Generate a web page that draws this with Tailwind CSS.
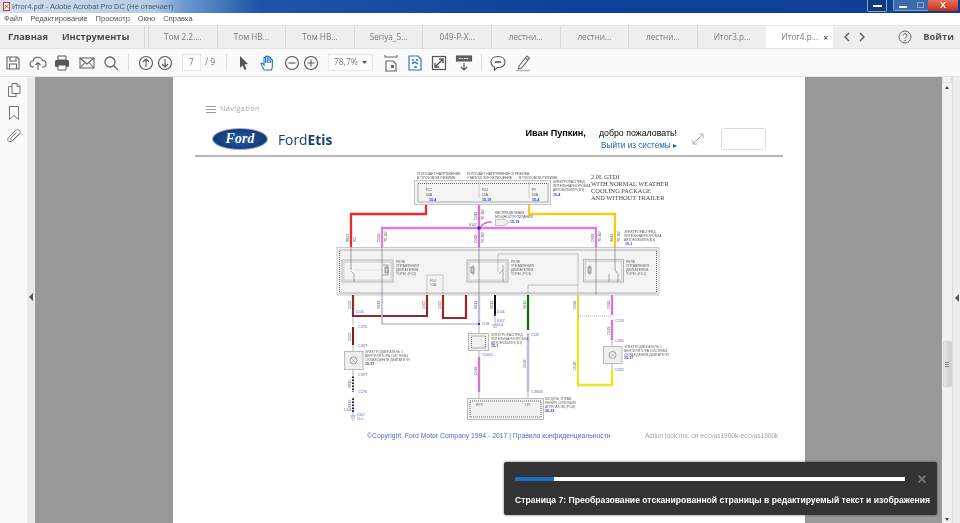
<!DOCTYPE html>
<html lang="ru">
<head>
<meta charset="utf-8">
<title>Итог4.pdf</title>
<script src="https://cdn.jsdelivr.net/npm/@tailwindcss/browser@4"></script>
</head>
<body class="m-0 overflow-hidden bg-[#999]">
<div class="relative w-[960px] h-[523px] overflow-hidden flex flex-col font-['Open_Sans','Noto_Sans',sans-serif] blur-[0.45px]">

  <!-- title bar -->
  <div class="h-[13px] shrink-0 flex items-center bg-[linear-gradient(90deg,#d3e0ef_0%,#b4cbe4_16%,#6f9bd0_19%,#1a55a8_27%,#0d4199_60%,#0d3f94_100%)]">
    <svg class="ml-[3px] w-[7px] h-[9px]" viewBox="0 0 7 9"><rect x="0.5" y="0.5" width="6" height="8" fill="#fff" stroke="#c33"/><path d="M1.5 7 L5 2.5 M2 3 L5.5 6" stroke="#c22" stroke-width="0.8"/></svg>
    <span class="ml-[2px] text-[7.4px] leading-none text-[#4b5a70] font-['Liberation_Sans',sans-serif]">Итог4.pdf - Adobe Acrobat Pro DC (Не отвечает)</span>
    <div class="ml-auto mr-[2px] flex items-start self-start h-[12px]">
      <div class="w-[20px] h-[12px] rounded-b-[2px] border border-t-0 border-[#8fa4c0] bg-[#0d3a80] flex items-center justify-center"><span class="w-[9px] h-[2px] bg-white"></span></div>
      <div class="ml-[6px] w-[19px] h-[11px] rounded-bl-[2px] border-l border-b border-[#8fa4c0] bg-[#3d6aa8] flex items-end justify-center pb-[2px]"><span class="w-[8px] h-[2px] bg-white"></span></div>
      <div class="w-[16px] h-[11px] border-b border-[#8fa4c0] bg-[#3d6aa8] flex items-center justify-center"><span class="w-[7px] h-[6px] border border-[#8ba6cc]"></span></div>
      <div class="w-[30px] h-[11px] rounded-br-[2px] bg-gradient-to-b from-[#e2725c] to-[#c8281a] flex items-center justify-center text-white text-[9px] leading-none font-bold font-['Liberation_Sans',sans-serif]">X</div>
    </div>
  </div>

  <!-- menu -->
  <div class="h-[12px] shrink-0 bg-white flex items-center pl-[4px] gap-[8px] text-[7.5px] leading-none text-[#555] font-['Liberation_Sans',sans-serif]">
    <span>Файл</span><span>Редактирование</span><span>Просмотр</span><span>Окно</span><span>Справка</span>
  </div>

  <!-- tabs -->
  <div class="h-[23px] shrink-0 bg-[#eeeeee] border-t border-[#e4e4e4] flex items-stretch text-[#7a7a7a] text-[8.2px]">
    <div class="w-[145px] flex items-center pl-[8px] gap-[14px] text-[9.3px] font-bold text-[#484848] border-r border-[#d8d8d8]">
      <span>Главная</span><span>Инструменты</span>
    </div>
    <div class="w-[3px]"></div>
    <div class="w-[68.6px] flex items-center justify-center border-l border-[#d8d8d8]">Том 2.2....</div>
    <div class="w-[68.6px] flex items-center justify-center border-l border-[#d8d8d8]">Том НВ...</div>
    <div class="w-[68.6px] flex items-center justify-center border-l border-[#d8d8d8]">Том НВ...</div>
    <div class="w-[68.6px] flex items-center justify-center border-l border-[#d8d8d8]">Seriya_5...</div>
    <div class="w-[68.6px] flex items-center justify-center border-l border-[#d8d8d8]">049-Р-Х...</div>
    <div class="w-[68.6px] flex items-center justify-center border-l border-[#d8d8d8]">лестни...</div>
    <div class="w-[68.6px] flex items-center justify-center border-l border-[#d8d8d8]">лестни...</div>
    <div class="w-[68.6px] flex items-center justify-center border-l border-[#d8d8d8]">лестни...</div>
    <div class="w-[69.6px] flex items-center justify-center border-l border-[#d8d8d8]">Итог3.р...</div>
    <div class="w-[67px] bg-white flex items-center pl-[15px] gap-[5px]"><span>Итог4.р...</span><span class="text-[9px] font-bold text-[#555] leading-none">×</span></div>
    <svg class="ml-[9px] self-center w-[10px] h-[10px]" viewBox="0 0 10 10" fill="none" stroke="#555" stroke-width="1.3"><path d="M7 1 L3 5 L7 9"/></svg>
    <svg class="ml-[5px] self-center w-[10px] h-[10px]" viewBox="0 0 10 10" fill="none" stroke="#555" stroke-width="1.3"><path d="M3 1 L7 5 L3 9"/></svg>
    <svg class="ml-[31px] self-center w-[14px] h-[14px]" viewBox="0 0 14 14" fill="none" stroke="#666"><circle cx="7" cy="7" r="6"/><path d="M5.2 5.5 a1.9 1.9 0 1 1 2.6 1.8 q-0.8 0.4 -0.8 1.3" /><circle cx="7" cy="10.5" r="0.4"/></svg>
    <span class="ml-[11px] self-center text-[9.3px] font-bold text-[#555]">Войти</span>
  </div>

  <!-- toolbar -->
  <div class="h-[29px] shrink-0 bg-[#fafafa] border-t border-[#e2e2e2] border-b flex items-center pl-[4px] text-[#777]">
    <svg class="w-[18px] h-[18px]" viewBox="0 0 18 18" fill="none" stroke="#666" stroke-width="1.1"><path d="M3 3 H13 L15 5 V15 H3 Z M6 3 V7 H12 V3 M5.5 15 V10 H12.5 V15"/></svg>
    <svg class="ml-[7px] w-[18px] h-[18px]" viewBox="0 0 18 18" fill="none" stroke="#666" stroke-width="1.1"><path d="M5 13 H4 A3 3 0 0 1 4 7 A5 5 0 0 1 13.5 6.5 A3.2 3.2 0 0 1 14 13 H13 M9 16 V9 M6.5 11 L9 8.5 L11.5 11"/></svg>
    <svg class="ml-[6px] w-[18px] h-[18px]" viewBox="0 0 18 18"><path d="M5 2 H13 V6 H5 Z" fill="none" stroke="#555"/><rect x="2" y="6" width="14" height="7" rx="1.5" fill="#555"/><path d="M5 11 H13 V16 H5 Z" fill="#fff" stroke="#555"/></svg>
    <svg class="ml-[7px] w-[18px] h-[18px]" viewBox="0 0 18 18" fill="none" stroke="#666" stroke-width="1.1"><rect x="2" y="4" width="14" height="10"/><path d="M2 4 L9 10 L16 4 M2 14 L7 8.5 M16 14 L11 8.5"/></svg>
    <svg class="ml-[6px] w-[18px] h-[18px]" viewBox="0 0 18 18" fill="none" stroke="#666" stroke-width="1.3"><circle cx="8" cy="8" r="5"/><path d="M11.5 11.5 L16 16"/></svg>
    <span class="ml-[8px] w-px h-[17px] bg-[#ddd]"></span>
    <svg class="ml-[8px] w-[18px] h-[18px]" viewBox="0 0 18 18" fill="none" stroke="#555" stroke-width="1.1"><circle cx="9" cy="9" r="6.5"/><path d="M9 13 V5 M6 8 L9 5 L12 8"/></svg>
    <svg class="ml-px w-[18px] h-[18px]" viewBox="0 0 18 18" fill="none" stroke="#555" stroke-width="1.1"><circle cx="9" cy="9" r="6.5"/><path d="M9 5 V13 M6 10 L9 13 L12 10"/></svg>
    <div class="ml-[8px] w-[19px] h-[17px] bg-white border border-[#e6e6e6] flex items-center justify-center text-[8.5px] leading-none">7</div>
    <span class="ml-[4px] w-[11px] text-[8.5px] leading-none whitespace-nowrap">/ 9</span>
    <span class="ml-[10px] w-px h-[17px] bg-[#ddd]"></span>
    <svg class="ml-[7px] w-[18px] h-[18px]" viewBox="0 0 18 18"><path d="M6 2 L14 10 L10.5 10.5 L12.5 15 L10.5 16 L8.5 11.5 L6 14 Z" fill="#555"/></svg>
    <svg class="ml-[7px] w-[18px] h-[18px]" viewBox="0 0 18 18" fill="none" stroke="#2d78c8" stroke-width="1.1"><path d="M5 16 C4 13 2 11 2 9.5 C2.5 8.5 4 9.5 5 11 V4 C5 3 6.5 3 6.5 4 V9 V2.8 C6.5 1.8 8.3 1.8 8.3 2.8 V9 V3 C8.3 2 10 2 10 3 V9 V4 C10 3 11.7 3 11.7 4 V9 V6 C11.7 5 13.4 5 13.4 6 V12 C13.4 14 12.5 15 12.5 16 Z"/></svg>
    <svg class="ml-[6px] w-[18px] h-[18px]" viewBox="0 0 18 18" fill="none" stroke="#555" stroke-width="1.1"><circle cx="9" cy="9" r="6.5"/><path d="M5.5 9 H12.5"/></svg>
    <svg class="ml-px w-[18px] h-[18px]" viewBox="0 0 18 18" fill="none" stroke="#555" stroke-width="1.1"><circle cx="9" cy="9" r="6.5"/><path d="M5.5 9 H12.5 M9 5.5 V12.5"/></svg>
    <div class="ml-[8px] w-[45px] h-[17px] bg-white border border-[#e6e6e6] flex items-center justify-between pl-[5px] pr-[5px] text-[8.5px] leading-none"><span>78,7%</span><svg class="w-[5px] h-[3px]" viewBox="0 0 5 3"><path d="M0 0 H5 L2.5 3 Z" fill="#555"/></svg></div>
    <svg class="ml-[9px] w-[18px] h-[18px]" viewBox="0 0 18 18" fill="none" stroke="#666" stroke-width="1.1"><path d="M3 1 V3 H15 V1 M4 17 V7 H11 L14 10 V17 M3 17 H15"/><path d="M9 11 H12 V14 H9 Z" fill="#666" stroke="none"/></svg>
    <svg class="ml-[6px] w-[18px] h-[18px]" viewBox="0 0 18 18" fill="none" stroke="#2d78c8" stroke-width="1.2"><path d="M3 2 H12 L15 5 V16 H3 Z"/><path d="M6 6 H8 M10 6 H12 M6 9.5 L9 8 L12 10 M8 13 L11 13" stroke-width="1.5"/></svg>
    <svg class="ml-[6px] w-[18px] h-[18px]" viewBox="0 0 18 18" fill="none" stroke="#555" stroke-width="1.2"><rect x="2.5" y="2.5" width="13" height="13"/><path d="M5 13 L13 5 M9 5 H13 V9 M5 9 V13 H9" stroke-width="1.4"/></svg>
    <svg class="ml-[7px] w-[18px] h-[18px]" viewBox="0 0 18 18" fill="none" stroke="#555" stroke-width="1.1"><rect x="1.5" y="2" width="15" height="5" fill="#666"/><path d="M4 4.5 H14" stroke="#fff" stroke-dasharray="1.5 1"/><path d="M9 9 V16 M6 13 L9 16 L12 13"/></svg>
    <span class="ml-[8px] w-px h-[17px] bg-[#ddd]"></span>
    <svg class="ml-[7px] w-[18px] h-[18px]" viewBox="0 0 18 18" fill="none" stroke="#555" stroke-width="1.1"><path d="M9 2.5 C4.5 2.5 2 5 2 8 C2 10.5 3.5 12 5.5 13 L5.5 16 L8.5 13.5 C13.5 13.5 16 11 16 8 C16 5 13.5 2.5 9 2.5 Z"/><path d="M6 8 H12" stroke-width="1.6"/></svg>
    <svg class="ml-[7px] w-[18px] h-[18px]" viewBox="0 0 18 18" fill="none" stroke="#666" stroke-width="1.1"><path d="M5 12 L13 2 L15.5 4 L7.5 14 L4.5 15 Z M11.5 4 L14 6"/><path d="M2 16.5 H16" stroke="#bbb" stroke-width="1.5"/></svg>
  </div>

  <!-- workspace -->
  <div class="flex-1 min-h-0 flex">
    <!-- left rail -->
    <div class="w-[27px] shrink-0 bg-[#fafafa] flex flex-col items-center pt-[5px] gap-[7px]">
      <svg class="w-[16px] h-[16px]" viewBox="0 0 16 16" fill="none" stroke="#777" stroke-width="1"><path d="M6 1.5 H11 L14 4.5 V11.5 H6 Z M11 1.5 V4.5 H14 M6 4.5 H2.5 V14.5 H10 V11.5"/></svg>
      <svg class="w-[16px] h-[16px]" viewBox="0 0 16 16" fill="none" stroke="#777" stroke-width="1"><path d="M3.5 1.5 H12.5 V14.5 L8 10.5 L3.5 14.5 Z"/></svg>
      <svg class="w-[16px] h-[16px]" viewBox="0 0 16 16" fill="none" stroke="#777" stroke-width="1"><path d="M13 6 L6.5 12.5 C5 14 2.5 14 2 12.5 C1.5 11 2 10 3 9 L9.5 2.5 C10.5 1.5 12.5 1.5 13.5 2.5 C14.5 3.5 14.5 5 13.5 6 L7.5 12 C7 12.5 5.5 12.5 5 11.5 C4.5 11 4.8 10 5.3 9.5 L10.5 4.5"/></svg>
    </div>
    <div class="w-[8px] shrink-0 bg-[#e9e9e9] flex items-center justify-center pt-[5px] pb-0">
      <span class="-ml-[1px] mt-[-12px] w-0 h-0 border-y-[4px] border-y-transparent border-r-[4px] border-r-[#555]"></span>
    </div>

    <!-- document viewer -->
    <div class="w-[907px] shrink-0 bg-[#999] overflow-hidden relative">
      <div class="ml-[138px] w-[632px] h-[460px] bg-white flex flex-col">
        <!-- nav -->
        <div class="h-[26px] mt-[19px] pl-[33px] flex items-center gap-[4px] shrink-0">
          <div class="w-[10px] flex flex-col gap-[2px]"><span class="h-px bg-[#999]"></span><span class="h-px bg-[#999]"></span><span class="h-px bg-[#999]"></span></div>
          <span class="text-[7.4px] leading-none tracking-[0.3px] text-[#aaa]">Navigation</span>
        </div>
        <!-- header -->
        <div class="ml-[22px] w-[588px] h-[35px] shrink-0 border-b-2 border-[#b5b5b5] flex items-start pt-[6px]">
          <div class="ml-[17px] w-[56px] h-[22px] rounded-[50%] bg-[radial-gradient(ellipse_at_center,#2a5fa8_0%,#123a7a_70%,#0d2c60_100%)] border border-[#9fb2cf] flex items-center justify-center text-white italic font-bold text-[14px] leading-none font-['Liberation_Serif',serif]">Ford</div>
          <div class="ml-[10px] mt-[3px] text-[13.8px] leading-[18px] text-[#1c3f74]">Ford<span class="font-bold">Etis</span></div>
          <div class="ml-auto -mt-[1px] flex flex-col items-end">
            <div class="text-[8.8px] leading-[12px] text-black whitespace-nowrap font-['Liberation_Sans',sans-serif]"><span class="font-bold text-[9.1px]">Иван Пупкин,</span><span class="ml-[13px]">добро пожаловать!</span></div>
            <div class="mt-[2px] text-[8.2px] leading-[9px] text-[#1d5f9e] whitespace-nowrap font-['Liberation_Sans',sans-serif]">Выйти из системы ▸</div>
          </div>
          <svg class="w-[12px] h-[12px] mt-[5px] ml-[15px] mr-[17px] shrink-0" viewBox="0 0 12 12" fill="none" stroke="#aaa"><path d="M1 11 L11 1 M7 1 H11 V5 M1 7 V11 H5"/></svg>
          <div class="w-[45px] h-[22px] rounded-[3px] border border-[#ddd] bg-white mr-[17px] shrink-0"></div>
        </div>

        <!-- diagram -->
        <svg class="ml-[157px] mt-[8px] block shrink-0" width="340" height="262" viewBox="330 165 340 262" font-family="Liberation Sans, sans-serif" fill="none">
          <!-- top fuse box -->
          <rect x="414.5" y="180.5" width="136" height="24" fill="#f3f3f3" stroke="#c4c4c4"/>
          <rect x="418" y="183.5" width="130" height="18.5" stroke="#444" stroke-width="0.8" stroke-dasharray="1 1"/>
          <g fill="#555" font-size="3.4">
            <text x="417" y="174.5">ПОЛУЧАЕТ НАПРЯЖЕНИЕ</text><text x="417" y="178.5">В ПУСКОВОМ РЕЖИМЕ</text>
            <text x="467" y="174.5">ПОЛУЧАЕТ НАПРЯЖЕНИЕ В РЕЖИМЕ</text><text x="467" y="178.5">«ЗАПУСК ЛИ» ВКЛЮЧЕНИЕ</text>
            <text x="519" y="178.5">В ПУСКОВОМ РЕЖИМЕ</text>
            <text x="553" y="183">ЭЛЕКТРОРАСПРЕД.</text><text x="553" y="187">ЛИТЕЛЬНАЯ КОРОБКА</text><text x="553" y="191">АВТОМОБИЛЯ (БЗ)</text>
            <text x="426" y="191">F12</text><text x="426" y="195.5">60A</text>
            <text x="482" y="191">F24</text><text x="482" y="195.5">15A</text>
            <text x="532" y="191">F9</text><text x="532" y="195.5">60A</text>
          </g>
          <g fill="#2433dd" font-size="3.6" font-weight="700">
            <text x="429" y="200.5">15-4</text><text x="482" y="200.5">15-19</text><text x="532" y="200.5">15-4</text><text x="553" y="195.5">15-4</text>
            <text x="510" y="223">15-19</text><text x="625" y="245">15-1</text>
            <text x="365" y="365">15-17</text><text x="624" y="359">15-17</text><text x="491" y="347">15-1</text><text x="545" y="412">26-22</text>
          </g>
          <path d="M426 181 V188 M479 181 V198 M529 181 V198" stroke="#aaa" stroke-width="0.5"/>
          <g fill="#444" font-family="Liberation Serif, serif" font-size="6.4">
            <text x="591" y="179">2.0L GTDI</text>
            <text x="591" y="186">WITH NORMAL WEATHER</text>
            <text x="591" y="193">COOLING PACKAGE</text>
            <text x="591" y="200">AND WITHOUT TRAILER</text>
          </g>
          <!-- upper wires -->
          <path d="M426 205 V214 H351 V247" stroke="#ea2b27" stroke-width="2.3"/>
          <path d="M479 205 V247" stroke="#d96cd2" stroke-width="2.3"/>
          <path d="M382 247 V228 H596 V247" stroke="#e07bd6" stroke-width="2.3"/>
          <path d="M529 205 V214 H615 V247" stroke="#f2cf10" stroke-width="2.3"/>
          <path d="M481 227 Q483 222 492 222" stroke="#d96cd2" stroke-width="1.5"/>
          <path d="M495.5 219.5 H505 L509 222.5 L505 225.5 H495.5 Z" fill="#f1f1f1" stroke="#888" stroke-width="0.5"/>
          <text x="495" y="214" fill="#555" font-size="3.4">РАСПРЕДЕЛЕНИЕ</text><text x="495" y="218" fill="#555" font-size="3.4">МОЩНОСТИ ПИТАНИЯ</text>
          <rect x="477.5" y="226.5" width="3" height="3" fill="#1f2fe0"/>
          <text x="469" y="226" fill="#555" font-size="3.2">S147</text>
          <g fill="#555" font-size="3.4">
            <text transform="translate(349 242) rotate(-90)">SB37</text><text transform="translate(356 242) rotate(-90)">RD</text>
            <text transform="translate(380 242) rotate(-90)">CB29</text><text transform="translate(387 242) rotate(-90)">YE-BU</text>
            <text transform="translate(477 220) rotate(-90)">CB19</text><text transform="translate(484 220) rotate(-90)">YE-BU</text>
            <text transform="translate(477 243) rotate(-90)">CB29</text><text transform="translate(484 243) rotate(-90)">YE-BU</text>
            <text transform="translate(594 242) rotate(-90)">CB29</text><text transform="translate(601 242) rotate(-90)">YE-BU</text>
            <text transform="translate(613 242) rotate(-90)">SB13</text><text transform="translate(620 242) rotate(-90)">YE-BU</text>
            <text x="624" y="233">ЭЛЕКТРОРАСПРЕД.</text><text x="624" y="237">ЛИТЕЛЬНАЯ КОРОБКА</text><text x="624" y="241">АВТОМОБИЛЯ (БЗ)</text>
          </g>

          <!-- relay box -->
          <rect x="337" y="247.5" width="322" height="47.5" fill="#f3f3f3" stroke="#c9c9c9"/>
          <rect x="339.5" y="250" width="317" height="43" stroke="#444" stroke-width="0.8" stroke-dasharray="1 1"/>
          <g fill="#e9e9e9" stroke="#b5b5b5">
            <rect x="342" y="260" width="51" height="22"/><rect x="467" y="260" width="41" height="22"/><rect x="583.5" y="259.5" width="40" height="22.5"/>
          </g>
          <g fill="#f4f4f4" stroke="#b5b5b5" stroke-width="0.5">
            <rect x="344" y="262" width="47" height="18"/><rect x="469" y="262" width="37" height="18"/><rect x="585.5" y="261.5" width="36" height="18.5"/>
          </g>
          <g stroke="#555" stroke-width="0.5">
            <path d="M351 247 V270 M351 271 L354 274 M354 274 V282"/>
            <path d="M382 247 V295 M383 265 H388 V275 H382"/>
            <rect x="385" y="267" width="3" height="6" fill="#ccc"/>
            <path d="M479 247 V295 M473 265 V275 M503 265 V282 M499 274 L503 270"/>
            <rect x="471" y="267" width="3" height="6" fill="#ccc"/>
            <path d="M596 247 V295 M590 265 V275 M615 247 V270 L618 274 V282 M609 274 V282"/>
            <rect x="588" y="267" width="3" height="6" fill="#ccc"/>
            <path d="M356 270 H383" stroke-dasharray="1 1" stroke="#aaa"/>
          </g>
          <path d="M498 272 V254 H578 V285 H528 V295" stroke="#aaa" stroke-width="0.7"/>
          <path d="M578 285 V295" stroke="#bbb" stroke-width="0.7"/>
          <path d="M427 295 V275 H443 V295" stroke="#aaa" stroke-width="0.6"/>
          <g fill="#666" font-size="3.4">
            <text x="396" y="263">РЕЛЕ</text><text x="396" y="267">УПРАВЛЕНИЯ</text><text x="396" y="271">ДВИГАТЕЛЕМ</text><text x="396" y="275">ТОРМ. (FC2)</text>
            <text x="511" y="263">РЕЛЕ</text><text x="511" y="267">УПРАВЛЕНИЯ</text><text x="511" y="271">ДВИГАТЕЛЕМ</text><text x="511" y="275">ТОРМ. (FC3)</text>
            <text x="626" y="263">РЕЛЕ</text><text x="626" y="267">УПРАВЛЕНИЯ</text><text x="626" y="271">ДВИГАТЕЛЕМ</text><text x="626" y="275">ТОРМ. (FC1)</text>
            <text x="430" y="282">F14</text><text x="430" y="286">15A</text>
          </g>

          <!-- lower wires -->
          <path d="M353 295 V316 H427 V295" stroke="#8e2a2a" stroke-width="2.2"/>
          <path d="M443 295 V318 H466 V295" stroke="#a02525" stroke-width="2.2"/>
          <path d="M382 295 V324 H479" stroke="#bfbfd4" stroke-width="1.7"/>
          <path d="M479 295 V324" stroke="#bfbfd4" stroke-width="2.4"/>
          <path d="M495 295 V315" stroke="#111" stroke-width="2"/>
          <path d="M528 295 V330" stroke="#176a17" stroke-width="2.3"/>
          <path d="M528 333 V392" stroke="#bdbdd6" stroke-width="2.6"/>
          <path d="M578 295 V320" stroke="#f0d51a" stroke-width="2"/>
          <path d="M578 320 V385 H612 V370" stroke="#eee51e" stroke-width="2.3"/>
          <path d="M612 295 V315" stroke="#de72d6" stroke-width="2.3"/>
          <path d="M612 320 V340" stroke="#de72d6" stroke-width="2.3"/>
          <path d="M578 316 H612" stroke="#777" stroke-width="0.6" stroke-dasharray="1 1"/>
          <path d="M479 357 V392" stroke="#d873cf" stroke-width="2.4"/>
          <path d="M353 327 V345" stroke="#7b2323" stroke-width="2.1"/>
          <path d="M353 375 V392 M353 397 V410" stroke="#222" stroke-width="2"/>
          <path d="M353 375 V392 M353 397 V410" stroke="#ddd" stroke-width="2" stroke-dasharray="1.5 1.5"/>
          <path d="M353 316 V325 M479 324 V333 M479 350 V357 M353 345 V351 M353 369 V375 M612 340 V346 M612 363 V370 M479 392 V398 M528 392 V398 M353 410 V416 M495 315 V325" stroke="#666" stroke-width="0.5"/>
          <path d="M350 416 H356 M351 418 H355 M352 420 H354 M492 325 H498 M493 327 H497" stroke="#777" stroke-width="0.6"/>
          <g fill="#1f2fe0">
            <rect x="352" y="315" width="2" height="2"/><rect x="352" y="410" width="2" height="2"/><rect x="478" y="323" width="2" height="2"/><rect x="494" y="314" width="2" height="2"/>
          </g>

          <!-- component boxes -->
          <rect x="468.5" y="333.5" width="20" height="17" fill="#f1f1f1" stroke="#bbb"/>
          <rect x="471.5" y="336" width="14" height="12" stroke="#444" stroke-width="0.8" stroke-dasharray="1 1"/>
          <rect x="344.5" y="351.5" width="18.5" height="18" fill="#eee" stroke="#bbb"/>
          <circle cx="353.5" cy="360.5" r="3.5" fill="#fff" stroke="#777" stroke-width="0.7"/>
          <path d="M351 358 L356 363 M356 358 L351 363" stroke="#777" stroke-width="0.5"/>
          <rect x="603.5" y="346.5" width="18.5" height="17" fill="#eee" stroke="#bbb"/>
          <circle cx="612.5" cy="355" r="3.5" fill="#fff" stroke="#777" stroke-width="0.7"/>
          <path d="M610 352.5 L615 357.5 M615 352.5 L610 357.5" stroke="#777" stroke-width="0.5"/>
          <rect x="467.5" y="398.5" width="76" height="21" fill="#f1f1f1" stroke="#bbb"/>
          <rect x="470" y="401" width="71" height="16" stroke="#444" stroke-width="0.8" stroke-dasharray="1 1"/>
          <g fill="#666" font-size="3.4">
            <text x="365" y="353">ЭЛЕКТРОДВИГАТЕЛЬ 1</text><text x="365" y="357">ВЕНТИЛЯТОРА СИСТЕМЫ</text><text x="365" y="361">ОХЛАЖДЕНИЯ ДВИГАТЕЛЯ</text>
            <text x="624" y="348">ЭЛЕКТРОДВИГАТЕЛЬ 1</text><text x="624" y="352">ВЕНТИЛЯТОРА СИСТЕМЫ</text><text x="624" y="356">ОХЛАЖДЕНИЯ ДВИГАТЕЛЯ</text>
            <text x="491" y="336">ЭЛЕКТРОРАСПРЕД.</text><text x="491" y="340">ЛИТЕЛЬНАЯ КОРОБКА</text><text x="491" y="344">АВТОМОБИЛЯ (БЗ)</text>
            <text x="545" y="400">МОДУЛЬ УПРАВ.</text><text x="545" y="404">ЛЕНИЯ СИЛОВЫМ</text><text x="545" y="408">АГРЕГАТОМ (PCM)</text>
            <text x="476" y="406">HPC</text><text x="525" y="406">LPI</text>
          </g>
          <g fill="#5566cc" font-size="3.2">
            <text x="356" y="313">D146</text><text x="358" y="328">C1295</text><text x="358" y="347">C1877</text><text x="358" y="376">C1877</text><text x="358" y="393">C1295</text>
            <text x="344" y="411">D146</text><text x="357" y="416">G107</text><text x="357" y="420">15-1</text>
            <text x="482" y="325">T148</text><text x="482" y="356">T10050</text><text x="497" y="313">D146</text><text x="497" y="322">G107</text><text x="497" y="326">15-4</text>
            <text x="531" y="336">C148</text><text x="531" y="393">C1890B</text><text x="615" y="322">C1295</text><text x="615" y="342">C1825</text><text x="615" y="371">C1825</text>
          </g>
          <g fill="#666" font-size="3.4">
            <text transform="translate(351 309) rotate(-90)">CB37</text><text transform="translate(380 309) rotate(-90)">SB11</text>
            <text transform="translate(425 309) rotate(-90)">CB37</text><text transform="translate(441 309) rotate(-90)">CB37</text>
            <text transform="translate(477 309) rotate(-90)">SB11</text><text transform="translate(493 309) rotate(-90)">SB12</text><text transform="translate(526 309) rotate(-90)">SB13</text>
            <text transform="translate(576 309) rotate(-90)">CB29</text><text transform="translate(610 309) rotate(-90)">CB29</text>
            <text transform="translate(351 341) rotate(-90)">CB37</text><text transform="translate(351 388) rotate(-90)">SB16</text><text transform="translate(351 408) rotate(-90)">SB16</text>
            <text transform="translate(477 375) rotate(-90)">CB29</text><text transform="translate(526 368) rotate(-90)">CE28</text><text transform="translate(576 370) rotate(-90)">CE28</text><text transform="translate(610 335) rotate(-90)">CB29</text>
          </g>
        </svg>

        <!-- footer -->
        <div class="ml-[194px] mt-[6px] flex items-center whitespace-nowrap leading-none font-['Liberation_Sans',sans-serif]">
          <span class="w-[278px] text-[6.8px] text-[#5a69c9]">©Copyright, Ford Motor Company 1994 - 2017 | Правила конфиденциальности</span>
          <span class="text-[6.5px] text-[#a3a3a3]">Action took ms. on eccvas1900k-eccvas1900k</span>
        </div>
      </div>
    </div>

    <!-- scrollbar -->
    <div class="w-[10px] shrink-0 bg-[#f1f1f1] flex flex-col items-center">
      <div class="h-[6px] w-full border border-t-0 border-[#ddd]"></div>
      <span class="mt-[3px] w-0 h-0 border-x-[2.5px] border-x-transparent border-b-[3px] border-b-[#444]"></span>
      <div class="mt-[252px] w-[9px] h-[46px] rounded-[1px] bg-gradient-to-r from-[#e4e4e4] to-[#cfcfd4] border border-[#d5d5d5] flex flex-col items-center justify-center gap-px"><span class="w-[4px] h-px bg-[#888]"></span><span class="w-[4px] h-px bg-[#888]"></span><span class="w-[4px] h-px bg-[#888]"></span></div>
      <span class="mt-auto mb-[2px] w-0 h-0 border-x-[2.5px] border-x-transparent border-t-[3px] border-t-[#444]"></span>
    </div>
    <div class="w-[8px] shrink-0 bg-[#eeeeee] border-l border-[#dddddd] flex items-start justify-center">
      <span class="mt-[217px] w-0 h-0 border-y-[4px] border-y-transparent border-r-[4px] border-r-[#555]"></span>
    </div>
  </div>

  <!-- toast -->
  <div class="absolute left-[504px] top-[462px] w-[433px] h-[53px] rounded-[2px] bg-[#333] shadow-[0_0_3px_rgba(0,0,0,0.5)] pl-[11px] pt-[15px]">
    <div class="flex items-center h-[4px]">
      <div class="w-[390px] h-[4px] bg-white flex"><span class="w-[39px] bg-[#1f6cc0]"></span></div>
      <svg class="ml-[13px] w-[8px] h-[8px]" viewBox="0 0 8 8" stroke="#777" stroke-width="1.6"><path d="M0.5 0.5 L7.5 7.5 M7.5 0.5 L0.5 7.5"/></svg>
    </div>
    <div class="mt-[12px] text-[8.6px] leading-[14px] font-bold text-white whitespace-nowrap font-['Liberation_Sans',sans-serif]">Страница 7: Преобразование отсканированной страницы в редактируемый текст и изображения</div>
  </div>
</div>
</body>
</html>
